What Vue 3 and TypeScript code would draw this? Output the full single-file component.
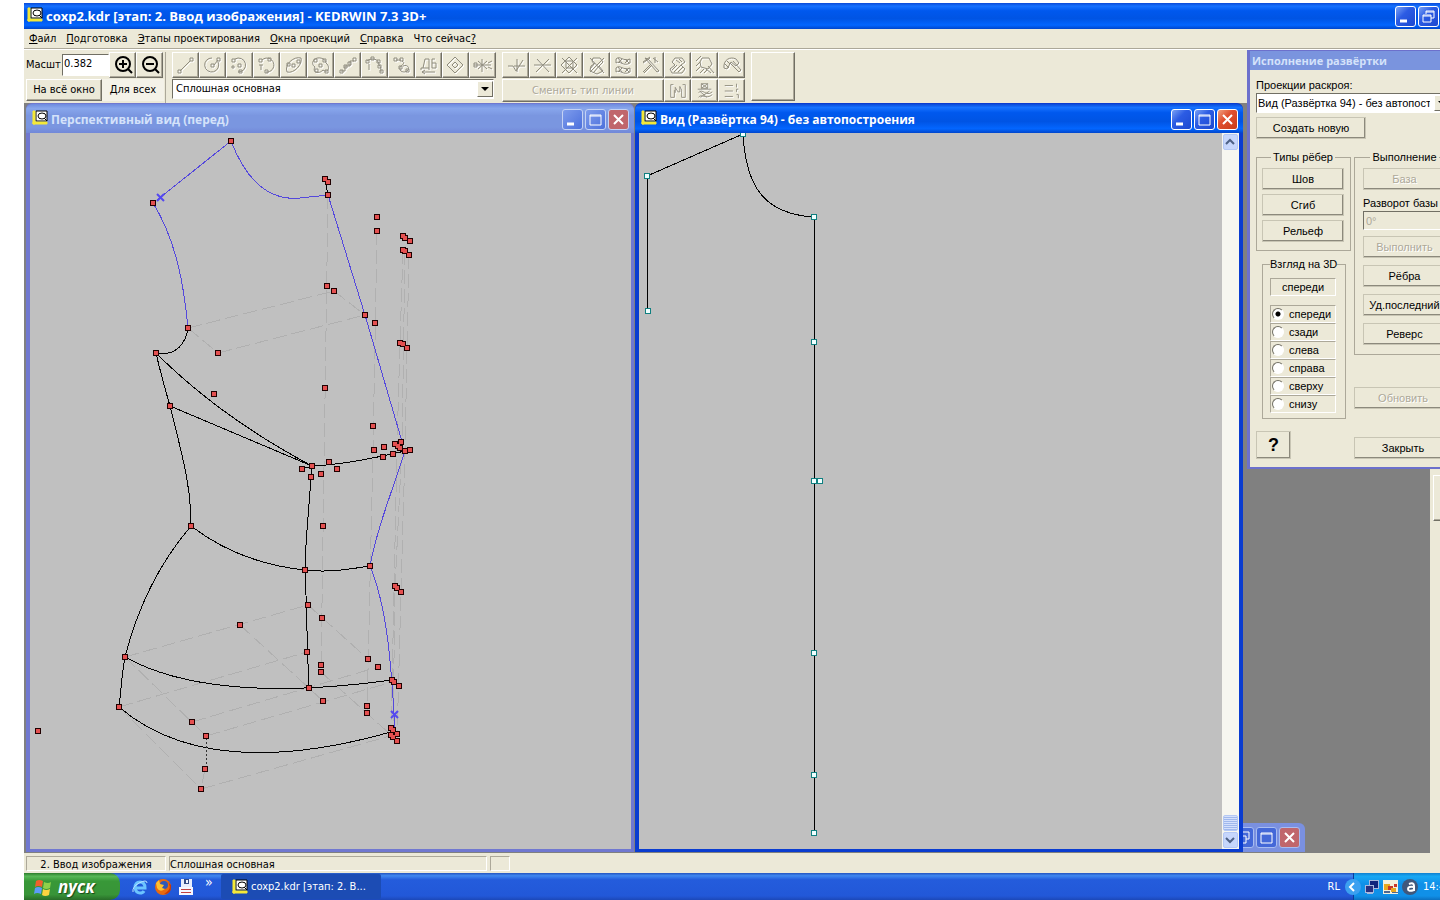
<script setup lang="ts">
import { ref } from 'vue'

type Point = [number, number]

const menu = [
  { key: 'Ф', rest: 'айл' },
  { key: 'П', rest: 'одготовка' },
  { key: 'Э', rest: 'тапы проектирования' },
  { key: 'О', rest: 'кна проекций' },
  { key: 'С', rest: 'правка' },
]

const drawTools = [
  { name: 'Отрезок', d: 'M5 17L15 7M3 16h3v3h-3zM15 4h3v3h-3z' },
  { name: 'Окружность', d: 'M10 4a7 7 0 1 0 6 4M9 10h3v3h-3zM15 4h3v3h-3zM12 11l4-5' },
  { name: 'Дуга с центром', d: 'M6 5a7 7 0 1 1 3 13M9 10h3v3h-3zM3 5h3v3h-3zM10 16h3v3h-3zM4 11v4M2 13h4' },
  { name: 'Дуга', d: 'M6 6a7 7 0 1 1 4 12M3 5h3v3h-3zM12 4h3v3h-3zM9 16h3v3h-3zM3 11h4M5 11v5' },
  { name: 'Эллипс', d: 'M4 18C1 10 11 2 18 4C20 10 11 20 4 18M9 10h3v3h-3zM14 6h3v3h-3zM4 9h3v3h-3z' },
  { name: 'Сплайн замкнутый', d: 'M4 6C7 2 16 4 16 9C21 13 18 20 13 16C8 21 2 18 5 13C2 11 2 8 4 6M9 10h3v3h-3zM4 5h3v3h-3zM13 5h3v3h-3zM5 15h3v3h-3zM15 16h3v3h-3z' },
  { name: 'Ломаная', d: 'M4 17h4v-5h5v-5h4M3 16h3v3h-3zM7 11h3v3h-3zM11 8h3v3h-3zM16 4h3v3h-3z' },
  { name: 'Сплайн', d: 'M3 7C8 3 15 5 15 11C17 13 17 15 17 18M2 6h3v3h-3zM7 3h3v3h-3zM13 6h3v3h-3zM14 11h3v3h-3zM16 16h3v3h-3zM5 10v6' },
  { name: 'Кривая', d: 'M5 6h5M11 7c4 2 0 4-2 6c-1 5 4 6 7 4c4-3 0-7-4-5M3 4h3v3h-3zM9 4h3v3h-3zM8 12h3v3h-3zM15 15h3v3h-3z' },
  { name: 'Текст', d: 'M3 14h8V5H7l-2 9M3 14v2M11 14v2M17 5h-3v9h4V9h-4M4 18h13M4 18l3-2M4 18l3 2' },
  { name: 'Точка', d: 'M10 3l8 8l-8 8l-8-8zM10 8l3 3l-3 3l-3-3z' },
  { name: 'Пучок', d: 'M2 11h17M10 5v13M6 7l9 8M15 7l-9 8M2 9v4h3V9zM16 9l4-2M16 13l4 2' },
]

const editTools = [
  { name: 'Подрезать', d: 'M3 12h5l3 5l7-11M9 12h11M12 5v13' },
  { name: 'Разбить', d: 'M2 11h17M5 5l12 13M17 5L4 18' },
  { name: 'Узлы', d: 'M3 4l15 15M18 4L3 19M10 3l8 8l-8 8l-8-8zM7 7h7v7H7z' },
  { name: 'Удалить контур', d: 'M7 4h7l3 4l-4 4l4 5l-6 3l-7-3l1-5l3-2l-2-3zM4 4l14 15M18 4L4 18M4 15l5-6M8 18l5-6' },
  { name: 'Повторить контур', d: 'M3 5c4-4 7 3 14 0v4c-7 4-10-3-14 0zM3 14c4-4 7 3 14 0v4c-7 4-10-3-14 0zM5 4l4 5M12 5l4 4M9 5L5 9M16 5l-4 4M5 13l4 5M12 14l4 4M9 14l-4 4M16 14l-4 4' },
  { name: 'Инструменты', d: 'M5 4l12 14l2-1L8 5zM12 11l-8 8M11 10l-8 8M3 8l7-5M3 9l7-5M13 4l5 4M15 3v6' },
  { name: 'Штриховка', d: 'M8 4h7l3 4l-4 3l4 4l-3 4H5l-2-4l5-4l-3-3zM5 16l5-5M7 18l7-7M11 18l5-5M9 6l4 3M12 5l3 3' },
  { name: 'Заливка', d: 'M2 7l5-5M2 12l4-4M2 17l4-4M6 19l4-4M10 19l3-3M8 4h7l3 6l-4 5l-7-2l-1-5zM14 12l6 7M12 15l5 4' },
  { name: 'Настройка штриховки', d: 'M3 14c-1-8 6-12 12-9l3 4l-3 3l-5-4l-4 7zM9 9l9 9l2-2l-8-9M4 10l4 4M6 7l3 3' },
]

const smallTools = [
  { name: 'Границы', d: 'M6 4H3v14h4v-8M15 10v8h4V4h-3M8 13V7l3 5h2V6l2 4' },
  { name: 'Слои', d: 'M3 9h15M7 3h7v5H7zM7 3l7 5M14 3L7 8M4 13c4-6 8 5 15-1M4 18c3-5 8 3 15-3M5 11l8 7M16 11l-10 7' },
  { name: 'Типы линий', d: 'M3 5h9M3 11h9M3 17h9M16 3v4M18 9h-2v3M16 15h2v4' },
]

const nodes: Point[] = [
  [231, 141], [325, 179], [328, 182], [328, 195], [377, 217], [377, 231], [153, 203],
  [405, 238], [403, 236], [410, 241], [405, 251], [403, 250], [409, 255], [327, 286], [334, 291],
  [188, 328], [218, 353], [365, 315], [375, 323], [156, 353], [403, 344], [400, 343], [407, 348],
  [214, 394], [325, 388], [170, 406], [373, 426], [302, 469], [312, 466], [311, 477], [329, 462],
  [321, 474], [337, 469], [374, 450], [384, 447], [383, 457], [393, 454], [395, 444], [401, 442],
  [400, 448], [398, 446], [410, 450], [405, 451], [191, 526], [323, 526], [305, 570], [370, 566],
  [397, 588], [395, 586], [401, 592], [308, 605], [322, 618], [240, 625], [125, 657], [307, 652],
  [321, 665], [321, 672], [368, 659], [378, 667], [309, 688], [394, 682], [392, 680], [399, 686],
  [323, 701], [119, 707], [367, 706], [367, 713], [192, 722], [206, 736], [205, 769], [201, 789],
  [393, 730], [391, 728], [397, 734], [393, 737], [391, 735], [397, 741], [38, 731],
]

const outlines = [
  'M188 328C186 342 177 357 156 353C161 375 166 392 170 406C181 452 191 482 191 526',
  'M156 353C199 396 252 434 312 466L170 406',
  'M325 179L328 195',
  'M312 466C340 465 375 458 405 451M397 447L405 451',
  'M302 469L312 466L311 477C309 510 305 545 305 570C307 610 307 650 309 688',
  'M191 526C226 553 267 566 305 570C328 573 350 569 370 566',
  'M191 526C162 560 139 602 125 657C122 673 121 690 119 707',
  'M125 657C180 688 270 697 392 680',
  'M119 707C175 755 263 768 391 732',
]
const activeOutlines = [
  'M157 200L231 141C246 180 269 201 300 198L328 195',
  'M153 203C176 240 184 285 188 328',
  'M328 195L365 315L403 445',
  'M405 451C392 492 378 525 370 566C388 610 391 665 395 728',
]
const guides = [
  'M188 328L334 291', 'M218 353L365 315', 'M188 328L218 353', 'M334 291L365 315',
  'M328 195L321 672', 'M377 231L373 450L367 713', 'M403 250L400 343L397 446L391 735',
  'M405 251L402 444L395 588L393 730', 'M409 255L407 348L405 451L401 592L397 741',
  'M125 657L308 605', 'M119 707L307 652', 'M308 605L368 659', 'M240 625L323 701',
  'M125 657L206 736', 'M192 722L378 667', 'M206 736L392 682', 'M119 707L201 789',
  'M201 789L397 734', 'M321 672L391 735', 'M205 769L201 789',
]
const patternNodes: Point[] = [
  [743, 134], [647, 176], [648, 311], [814, 217], [814, 342], [814, 481],
  [820, 481], [814, 653], [814, 775], [814, 833],
]

const views = ['спереди', 'сзади', 'слева', 'справа', 'сверху', 'снизу']
const view = ref('спереди')
const scale = ref('0.382')
</script>

<template>
  <div class="app">
    <header class="titlebar main-title">
      <svg class="doc-icon" viewBox="0 0 16 16"><path class="doc-bg" d="M4 1h11v10H4z" /><path class="doc-ruler" d="M1 1h2v13h-2zM1 12h14v2h-14z" /><ellipse cx="10" cy="6" rx="4" ry="3" /><path d="M12 8l3 3" /></svg>
      <h1>coxp2.kdr [этап: 2. Ввод изображения] - KEDRWIN 7.3 3D+</h1>
      <div class="win-buttons">
        <button class="wb" aria-label="Свернуть"><svg viewBox="0 0 19 19"><path class="thick" d="M4 14h7" /></svg></button>
        <button class="wb" aria-label="Восстановить"><svg viewBox="0 0 19 19"><path d="M7 7V4h8v7h-3M4 8h8v7H4zM4 9h8M7 5h8" /></svg></button>
      </div>
    </header>

    <nav class="menubar">
      <button v-for="m in menu" :key="m.rest"><u>{{ m.key }}</u>{{ m.rest }}</button>
      <button>Что сейчас<u>?</u></button>
    </nav>

    <div class="toolbar">
      <div class="group scale-group">
        <div class="row">
          <label for="scale">Масшт</label>
          <input id="scale" v-model="scale" type="text">
          <button class="tool zoom" aria-label="Увеличить"><svg viewBox="0 0 22 22"><circle cx="11" cy="10" r="7" /><path d="M7 10h8M11 6v8M16 15l4 4" /></svg></button>
          <button class="tool zoom" aria-label="Уменьшить"><svg viewBox="0 0 22 22"><circle cx="11" cy="10" r="7" /><path d="M7 10h8M16 15l4 4" /></svg></button>
        </div>
        <div class="row">
          <button class="tool fit">На всё окно</button>
          <button class="tool all">Для всех</button>
        </div>
      </div>
      <div class="group">
        <div class="row">
          <button v-for="t in drawTools" :key="t.name" class="tool" disabled :aria-label="t.name"><svg viewBox="0 0 22 22"><path class="lit" :d="t.d" /><path :d="t.d" /></svg></button>
        </div>
        <div class="combo line-combo">
          <select aria-label="Тип линии"><option>Сплошная основная</option></select>
          <span class="arrow" />
        </div>
      </div>
      <div class="group edit-group">
        <div class="row">
          <button v-for="t in editTools" :key="t.name" class="tool" disabled :aria-label="t.name"><svg viewBox="0 0 22 22"><path class="lit" :d="t.d" /><path :d="t.d" /></svg></button>
        </div>
        <div class="row low">
          <button class="tool change" disabled>Сменить тип линии</button>
          <button v-for="t in smallTools" :key="t.name" class="tool" disabled :aria-label="t.name"><svg viewBox="0 0 22 22"><path class="lit" :d="t.d" /><path :d="t.d" /></svg></button>
        </div>
      </div>
      <button class="tool blank" aria-label="Образец" />
    </div>

    <main class="desk">
      <div class="edge"><button class="tool" aria-label="Панель" /></div>

      <div class="minimized">
        <button class="wb" aria-label="Восстановить"><svg viewBox="0 0 19 19"><path d="M7 7V4h8v7h-3M4 8h8v7H4z" /></svg></button>
        <button class="wb" aria-label="Развернуть"><svg viewBox="0 0 19 19"><path d="M4 5h11v10H4zM4 6h11" /></svg></button>
        <button class="wb close" aria-label="Закрыть"><svg viewBox="0 0 19 19"><path d="M5 5l9 9M14 5l-9 9" /></svg></button>
      </div>

      <section class="window left inactive">
        <div class="titlebar">
          <svg class="doc-icon" viewBox="0 0 16 16"><path class="doc-bg" d="M4 1h11v10H4z" /><path class="doc-ruler" d="M1 1h2v13h-2zM1 12h14v2h-14z" /><ellipse cx="10" cy="6" rx="4" ry="3" /><path d="M12 8l3 3" /></svg>
          <h2>Перспективный вид (перед)</h2>
          <div class="win-buttons">
            <button class="wb" aria-label="Свернуть"><svg viewBox="0 0 19 19"><path class="thick" d="M4 14h7" /></svg></button>
            <button class="wb" aria-label="Развернуть"><svg viewBox="0 0 19 19"><path d="M4 5h11v10H4zM4 6h11" /></svg></button>
            <button class="wb close" aria-label="Закрыть"><svg viewBox="0 0 19 19"><path d="M5 5l9 9M14 5l-9 9" /></svg></button>
          </div>
        </div>
        <div class="client">
          <svg class="drawing">
            <g transform="translate(-30 -133)">
              <path v-for="d in guides" :key="d" class="guide" :d="d" />
              <path v-for="d in outlines" :key="d" class="outline" :d="d" />
              <path v-for="d in activeOutlines" :key="d" class="active" :d="d" />
              <path class="dots" d="M206 738V767" />
              <path class="cross" d="M157 194l7 7M164 194l-7 7M391 711l7 7M398 711l-7 7" />
              <rect v-for="([x, y], i) in nodes" :key="i" class="node" :x="x - 3" :y="y - 3" width="6" height="6" />
              <rect v-for="([x, y], i) in nodes" :key="`f${i}`" class="node-fill" :x="x - 2" :y="y - 2" width="4" height="4" />
            </g>
          </svg>
        </div>
      </section>

      <section class="window right">
        <div class="titlebar">
          <svg class="doc-icon" viewBox="0 0 16 16"><path class="doc-bg" d="M4 1h11v10H4z" /><path class="doc-ruler" d="M1 1h2v13h-2zM1 12h14v2h-14z" /><ellipse cx="10" cy="6" rx="4" ry="3" /><path d="M12 8l3 3" /></svg>
          <h2>Вид (Развёртка 94) - без автопостроения</h2>
          <div class="win-buttons">
            <button class="wb" aria-label="Свернуть"><svg viewBox="0 0 19 19"><path class="thick" d="M4 14h7" /></svg></button>
            <button class="wb" aria-label="Развернуть"><svg viewBox="0 0 19 19"><path d="M4 5h11v10H4zM4 6h11" /></svg></button>
            <button class="wb close" aria-label="Закрыть"><svg viewBox="0 0 19 19"><path d="M5 5l9 9M14 5l-9 9" /></svg></button>
          </div>
        </div>
        <div class="client">
          <svg class="drawing">
            <g transform="translate(-639 -133)">
              <path class="outline" d="M648 311L647 176L743 134C746 188 765 214 814 217V833" />
              <rect v-for="([x, y], i) in patternNodes" :key="i" class="pnode" :x="x - 3" :y="y - 3" width="6" height="6" />
              <rect v-for="([x, y], i) in patternNodes" :key="`f${i}`" class="pnode-fill" :x="x - 2" :y="y - 2" width="4" height="4" />
            </g>
          </svg>
          <div class="scrollbar">
            <button aria-label="Вверх"><svg viewBox="0 0 13 14"><path d="M2 9l4-4l4 4" /></svg></button>
            <span class="track" />
            <span class="thumb" />
            <button aria-label="Вниз"><svg viewBox="0 0 13 14"><path d="M2 5l4 4l4-4" /></svg></button>
          </div>
        </div>
      </section>
    </main>

    <aside class="palette">
      <h2>Исполнение развёртки</h2>
      <div class="palette-body">
        <label for="proj">Проекции раскроя:</label>
        <div class="combo proj-combo">
          <select id="proj"><option>Вид (Развёртка 94) - без автопостроения</option></select>
          <span class="arrow" />
        </div>
        <button class="btn create">Создать новую</button>
        <div class="columns">
          <div class="col-left">
            <fieldset class="types">
              <legend>Типы рёбер</legend>
              <button class="btn">Шов</button>
              <button class="btn">Сгиб</button>
              <button class="btn">Рельеф</button>
            </fieldset>
            <fieldset class="look">
              <legend>Взгляд на 3D</legend>
              <output>{{ view }}</output>
              <label v-for="v in views" :key="v"><input v-model="view" type="radio" name="view" :value="v">{{ v }}</label>
            </fieldset>
            <button class="btn help">?</button>
          </div>
          <div class="col-right">
            <fieldset class="exec">
              <legend>Выполнение</legend>
              <button class="btn" disabled>База</button>
              <label for="turn">Разворот базы</label>
              <input id="turn" type="text" value="0°" disabled>
              <button class="btn" disabled>Выполнить</button>
              <button class="btn">Рёбра</button>
              <button class="btn">Уд.последний</button>
              <button class="btn">Реверс</button>
            </fieldset>
            <button class="btn refresh" disabled>Обновить</button>
            <button class="btn shut">Закрыть</button>
          </div>
        </div>
      </div>
    </aside>

    <div class="status">
      <span class="stage">2. Ввод изображения</span>
      <span class="line">Сплошная основная</span>
      <span class="spare" />
    </div>

    <footer class="taskbar">
      <button class="start">
        <svg viewBox="0 0 20 20"><path fill="#f0602c" d="M3 4q3-2 7 0l-1 6q-4-2-7 0z" /><path fill="#8fd04a" d="M11 5q4 2 7 0l-1 6q-4 2-7 0z" /><path fill="#5c9cf8" d="M2 11q3-2 7 0l-1 6q-4-2-7 0z" /><path fill="#fbd440" d="M10 12q3 2 7 0l-1 6q-4 2-7 0z" /></svg>
        пуск
      </button>
      <div class="quick">
        <svg viewBox="0 0 18 18"><path fill="none" stroke="#6cc4ff" stroke-width="3" d="M4 10h10q0-6-5-6t-5 6q1 5 5 5q3 0 4-2" /><path fill="none" stroke="#b8e4ff" d="M2 14Q1 9 8 5q8-4 8 0" /></svg>
        <svg viewBox="0 0 18 18"><circle cx="9" cy="9" r="8" fill="#e86a10" /><circle cx="10" cy="7" r="4" fill="#2e58b8" /><path fill="#ffc030" d="M2 5l3-3l1 4l4 1l-2 3l3 1q-5 4-8-1z" /><path fill="#c83808" d="M14 4q5 7-4 12q8 0 7-9z" /></svg>
        <svg viewBox="0 0 18 18"><path fill="#e8eefc" d="M4 1h11v8H4z" /><path fill="#334c84" d="M7 1h5v5H7z" /><path fill="#f4f6ff" d="M9 2h2v3H9zM2 9h14v8H2z" /><path fill="#c04040" d="M4 11h10v1H4zM4 14h10v1H4z" /></svg>
      </div>
      <span class="more">»</span>
      <button class="task">
        <svg class="doc-icon" viewBox="0 0 16 16"><path class="doc-bg" d="M4 1h11v10H4z" /><path class="doc-ruler" d="M1 1h2v13h-2zM1 12h14v2h-14z" /><ellipse cx="10" cy="6" rx="4" ry="3" /><path d="M12 8l3 3" /></svg>
        coxp2.kdr [этап: 2. В...
      </button>
      <span class="lang">RL</span>
      <div class="tray">
        <button class="chevron" aria-label="Показать значки"><svg viewBox="0 0 16 16"><path d="M9 4L5 8l4 4" /></svg></button>
        <svg viewBox="0 0 16 16"><path fill="#a8b8dc" d="M5 1h10v9H5z" /><path fill="#10247c" d="M6 2h8v7H6z" /><path fill="#a8b8dc" d="M1 6h9v8H1zM3 14h6v1H3z" /><path fill="#283080" d="M2 7h7v6H2z" /></svg>
        <svg viewBox="0 0 16 16"><path fill="#f4f0dc" d="M0 1h15v14H0z" /><path fill="#e8a820" d="M1 5h6v6H1z" /><path fill="#c83828" d="M5 7h5v4H5zM11 5h3v3h-3z" /><path fill="#e8a820" d="M8 9h5v4H8z" /><path fill="#506890" d="M1 12h6v2H1zM9 13h6v1H9z" /></svg>
        <svg viewBox="0 0 16 16"><circle cx="8" cy="8" r="8" fill="#40587c" /><path fill="none" stroke="#fff" stroke-width="2" d="M7 5q5-2 5 2v5M12 8q-6-1-6 2t6 1" /></svg>
        <time>14:42</time>
      </div>
    </footer>
  </div>
</template>

<style>
body {
  background: #fff;
  overflow: hidden;
}
</style>

<style scoped>
* {
  box-sizing: border-box;
}

.app {
  position: relative;
  display: flex;
  flex-direction: column;
  height: 100vh;
  margin-left: 24px;
  padding-top: 3px;
  overflow: hidden;
  color: #000;
  font: 11px/14px "DejaVu Sans Condensed", "DejaVu Sans", sans-serif;
}

button,
input,
select {
  margin: 0;
  padding: 0;
  border: 0;
  border-radius: 0;
  background: none;
  color: inherit;
  font: inherit;
}

svg {
  display: block;
  flex: none;
}

h1,
h2 {
  margin: 0;
  color: #fff;
  font: bold 12px/16px "Open Sans", "Noto Sans", sans-serif;
  white-space: nowrap;
}

h1 {
  font-size: 13px;
}

.titlebar {
  display: flex;
  align-items: center;
  flex: none;
  gap: 3px;
  height: 29px;
  padding: 2px 5px 0 6px;
  background: linear-gradient(#0a4ad8, #1672ff 12%, #0058ee 30%, #0054e4 60%, #0366ff 85%, #0046cc);
}

.main-title {
  height: 26px;
  padding: 0 1px 0 3px;
}

.doc-icon {
  width: 16px;
  height: 16px;
  margin-top: -3px;
  fill: #fff;
  stroke: #000;
}

.doc-ruler {
  fill: #f4e838;
  stroke: #f4e838;
}

.win-buttons {
  display: flex;
  gap: 2px;
  margin-left: auto;
}

.wb {
  width: 21px;
  height: 21px;
  border: 1px solid #fff;
  border-radius: 3px;
  background: linear-gradient(135deg, #7ba2f4, #2c5ce4 40%, #1c48d0);
}

.wb svg {
  width: 19px;
  height: 19px;
  fill: none;
  stroke: #fff;
  stroke-width: 1;
}

.wb .thick {
  stroke-width: 3;
}

.wb.close {
  background: linear-gradient(135deg, #f0a080, #e05030 40%, #c83c18);
}

.wb.close svg {
  stroke-width: 2;
}

.menubar {
  display: flex;
  flex: none;
  gap: 10px;
  height: 20px;
  padding: 0 5px;
  border-bottom: 1px solid #aca899;
  background: #ece9d8;
}

.toolbar {
  display: flex;
  flex: none;
  gap: 6px;
  height: 54px;
  padding: 2px 2px 0;
  border-top: 1px solid #fff;
  background: #ece9d8;
}

.group .row {
  display: flex;
  align-items: center;
}

.group .row:first-child {
  margin-bottom: 1px;
}

.scale-group {
  width: 140px;
  border-right: 1px solid #aca899;
}

.scale-group label {
  width: 36px;
}

.scale-group input {
  width: 47px;
  height: 22px;
  padding: 0 1px 3px;
  border: 1px solid;
  border-color: #716f64 #fff #fff #716f64;
  background: #fff;
}

.tool {
  display: flex;
  align-items: center;
  justify-content: center;
  width: 27px;
  height: 26px;
  border: 1px solid;
  border-color: #fff #716f64 #716f64 #fff;
  background: #ece9d8;
  box-shadow: inset -1px -1px #aca899;
}

.tool svg {
  width: 22px;
  height: 22px;
  fill: none;
  stroke: #8f8c7e;
  stroke-width: 1;
}

.tool .lit {
  stroke: #fff;
  transform: translate(1px, 1px);
}

.tool.zoom svg {
  stroke: #000;
  stroke-width: 2;
}

.tool.fit {
  width: 76px;
  height: 22px;
}

.tool.all {
  width: 62px;
  height: 22px;
  border-color: #f4f2e8;
  background: #f4f2e8;
  box-shadow: none;
}

.combo {
  position: relative;
  height: 20px;
  border: 1px solid;
  border-color: #716f64 #fff #fff #716f64;
  background: #fff;
}

.line-combo {
  width: 322px;
  margin-top: 1px;
}

.combo select {
  width: 100%;
  height: 18px;
  padding: 0 3px;
  appearance: none;
}

.arrow {
  position: absolute;
  top: 1px;
  right: 0;
  display: flex;
  align-items: center;
  justify-content: center;
  width: 16px;
  height: 16px;
  border: 1px solid;
  border-color: #fff #716f64 #716f64 #fff;
  background: #ece9d8;
  pointer-events: none;
}

.arrow::before {
  content: "";
  border: 4px solid transparent;
  border-top-color: #000;
  border-bottom: 0;
}

.low .tool {
  height: 23px;
}

.low .tool svg {
  height: 20px;
}

.low .tool.change {
  width: 162px;
  color: #aca899;
  text-shadow: 1px 1px #fff;
}

.tool.blank {
  width: 44px;
  height: 49px;
}

.desk {
  position: relative;
  flex: 1;
  min-height: 0;
  background: #808080;
}

.edge {
  position: absolute;
  top: 0;
  right: 0;
  bottom: 0;
  width: 10px;
  padding: 372px 0 0 3px;
  background: #ece9d8;
}

.edge .tool {
  height: 46px;
}

.window {
  position: absolute;
  top: 0;
  bottom: 1px;
  display: flex;
  flex-direction: column;
  padding: 1px 4px 3px;
  border-radius: 6px 6px 0 0;
  background: #0a3cd0;
}

.window .titlebar {
  margin: 0 -4px;
  border-radius: 6px 6px 0 0;
}

.left {
  left: 2px;
  width: 608px;
}

.right {
  left: 611px;
  width: 608px;
}

.inactive {
  background: #7078d0;
}

.inactive .titlebar {
  background: linear-gradient(#6e8ade, #88a6ec 15%, #7a96e0 40%, #7a96e0 80%, #7288d8);
}

.inactive h2 {
  color: #d4e2fa;
}

.inactive .wb {
  border-color: #c4d2f4;
  background: linear-gradient(135deg, #7e9cec, #4c70dc);
}

.inactive .wb.close,
.minimized .wb.close {
  background: #c0666c;
}

.client {
  display: flex;
  flex: 1;
  min-height: 0;
  background: #c0c0c0;
}

.left .client {
  margin-right: -1px;
}

.drawing {
  flex: 1;
  min-width: 0;
  height: 100%;
  fill: none;
  shape-rendering: crispEdges;
}

.outline {
  stroke: #000;
}

.active {
  stroke: #5448dc;
}

.guide {
  stroke: #b0b0b0;
  stroke-dasharray: 14 5;
}

.dots {
  stroke: #333;
  stroke-dasharray: 2 2;
}

.cross {
  stroke: #5448f0;
  stroke-width: 2;
  shape-rendering: auto;
}

.node {
  fill: #200000;
}

.node-fill {
  fill: #e45050;
}

.pnode {
  fill: #108080;
}

.pnode-fill {
  fill: #f0ffff;
}

.scrollbar {
  display: flex;
  flex-direction: column;
  width: 17px;
  padding: 1px;
  background: #f6f6f0;
}

.scrollbar button,
.thumb {
  height: 16px;
  border: 1px solid #b4c8f4;
  border-radius: 2px;
  background: #c6d6fc;
}

.scrollbar svg {
  width: 13px;
  height: 14px;
  fill: none;
  stroke: #4d6185;
  stroke-width: 2;
}

.track {
  flex: 1;
}

.thumb {
  margin-bottom: 1px;
  background: repeating-linear-gradient(#d4e0fc 0 1px, #a0b8ec 1px 2px);
}

.minimized {
  position: absolute;
  right: 135px;
  bottom: 1px;
  display: flex;
  gap: 2px;
  width: 100px;
  height: 29px;
  justify-content: flex-end;
  padding: 4px 5px;
  border-radius: 0 6px 0 0;
  background: #7a90e0;
}

.minimized .wb {
  border-color: #a8bcf0;
  background: #4468d8;
}

.palette {
  position: absolute;
  top: 50px;
  right: -22px;
  width: 215px;
  padding: 1px 2px 2px 3px;
  background: #6c70cc;
  font: 11px/14px "Liberation Sans", Arial, sans-serif;
}

.palette h2 {
  height: 19px;
  padding-left: 2px;
  background: #7a94de;
  color: #d4e2fa;
  font-size: 11px;
  line-height: 20px;
}

.palette-body {
  height: 397px;
  padding: 8px 6px 0;
  background: #ece9d8;
}

.palette-body > label {
  display: block;
}

.proj-combo {
  width: 195px;
  margin-top: 1px;
}

.proj-combo select {
  padding: 0 20px 0 1px;
}

.btn {
  display: block;
  width: 100%;
  height: 22px;
  border: 1px solid;
  border-color: #fff #716f64 #716f64 #fff;
  outline: 1px solid #c8c5b4;
  outline-offset: -1px;
  box-shadow: inset -1px -1px #8c897c;
  white-space: nowrap;
}

.btn:disabled {
  color: #aca899;
  text-shadow: 1px 1px #fff;
}

.create {
  width: 110px;
  margin-top: 4px;
}

.columns {
  display: grid;
  grid-template-columns: 95px 98px;
  gap: 3px;
  margin-top: 11px;
}

fieldset {
  min-width: 0;
  margin: 0;
  border: 1px solid #aca899;
}

legend {
  margin-left: auto;
  margin-right: auto;
  padding: 0 2px;
  white-space: nowrap;
}

.types {
  display: flex;
  flex-direction: column;
  height: 101px;
  padding: 4px 6px 0 5px;
}

.types .btn + .btn {
  margin-top: 4px;
}

.look {
  width: 84px;
  height: 162px;
  margin: 6px 0 0 6px;
  padding: 7px 9px 0 7px;
}

.look legend {
  padding: 0;
}

.look output,
.look label {
  display: flex;
  align-items: center;
  height: 18px;
  border: 1px solid;
  border-color: #aca899 #fff #fff #aca899;
}

.look output {
  justify-content: center;
  margin-bottom: 9px;
}

.look label {
  gap: 5px;
  padding-left: 1px;
}

.look input {
  width: 12px;
  height: 12px;
  border: 1px solid;
  border-color: #716f64 #fff #fff #716f64;
  border-radius: 6px;
  background: #fff;
  appearance: none;
}

.look input:checked {
  background: radial-gradient(circle, #000 2px, #fff 3px);
}

.help {
  width: 35px;
  height: 28px;
  margin-top: 12px;
  font-size: 18px;
  font-weight: bold;
}

.exec {
  height: 205px;
  padding: 4px 5px 0 8px;
}

.exec .btn {
  margin-bottom: 7px;
}

.exec label {
  display: block;
  margin: -1px 0 1px;
  white-space: nowrap;
}

.exec input {
  width: 100%;
  height: 19px;
  margin-bottom: 6px;
  padding: 0 2px;
  border: 1px solid;
  border-color: #716f64 #fff #fff #716f64;
  color: #aca899;
}

.refresh {
  margin-top: 32px;
}

.shut {
  margin-top: 28px;
}

.status {
  display: flex;
  flex: none;
  gap: 3px;
  height: 20px;
  padding: 3px 2px 2px;
  background: #ece9d8;
}

.status span {
  border: 1px solid;
  border-color: #aca899 #fff #fff #aca899;
  line-height: 16px;
}

.stage {
  width: 140px;
  text-align: center;
}

.line {
  width: 318px;
}

.spare {
  width: 20px;
}

.taskbar {
  display: flex;
  align-items: center;
  flex: none;
  height: 27px;
  background: linear-gradient(#2454c0, #4088f0 10%, #245cdc 25%, #2258d8 85%, #1c48b8);
  color: #fff;
}

.start {
  display: flex;
  align-items: center;
  gap: 5px;
  width: 96px;
  height: 27px;
  padding-left: 9px;
  border-radius: 0 10px 10px 0;
  background: linear-gradient(#2c7c2c, #58b858 12%, #389838 30%, #389438 80%, #286c28);
  font: italic bold 17px/20px "Open Sans", "Noto Sans", sans-serif;
  text-shadow: 1px 1px 1px #184818;
}

.start svg {
  width: 20px;
  height: 20px;
}

.quick {
  display: flex;
  gap: 5px;
  margin-left: 11px;
}

.quick svg {
  width: 18px;
  height: 18px;
}

.more {
  width: 8px;
  margin: -10px 8px 0 10px;
  font-size: 14px;
}

.task {
  display: flex;
  align-items: center;
  gap: 3px;
  width: 160px;
  height: 25px;
  padding-left: 11px;
  border-radius: 2px;
  background: #1c4cb4;
  white-space: nowrap;
}

.task .doc-icon {
  margin-top: 0;
}

.lang {
  margin-left: auto;
  margin-right: 13px;
}

.tray {
  display: flex;
  align-items: center;
  gap: 3px;
  width: 87px;
  height: 27px;
  border-left: 1px solid #0c3c98;
  background: linear-gradient(#1080d0, #18a8f4 12%, #1090e8 40%, #1090e8 85%, #0c70c0);
}

.tray svg {
  width: 16px;
  height: 16px;
}

.chevron {
  margin-left: -9px;
  border-radius: 8px;
  background: #3ca0f0;
}

.chevron svg {
  fill: none;
  stroke: #fff;
  stroke-width: 2;
}

time {
  margin-left: 2px;
}
</style>
